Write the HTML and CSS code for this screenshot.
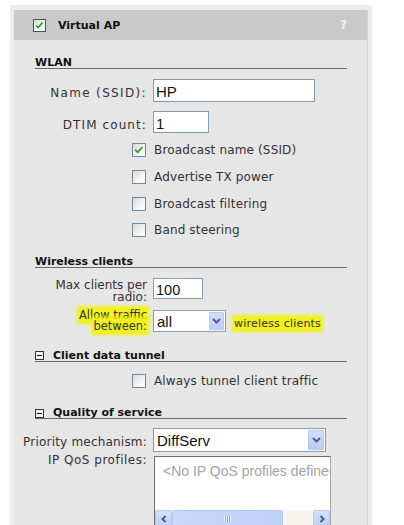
FILE: index.html
```html
<!DOCTYPE html>
<html>
<head>
<meta charset="utf-8">
<link rel="stylesheet" href="styles.css">
</head>
<body>
<div class="frame">
  <div class="panel">
    <div class="titlebar">
      <span class="cb hdr"><svg viewBox="0 0 13 13" width="11" height="11"><polyline points="2.5,6.5 5,9 10,3" fill="none" stroke="#22a322" stroke-width="2"/></svg></span>
      <span class="title">Virtual AP</span>
      <span class="help">?</span>
    </div>

    <div class="sect s-wlan"><span>WLAN</span></div>

    <div class="row r-name">
      <label class="lbl sp-name">Name (SSID):</label>
      <div class="tb w-name">HP</div>
    </div>
    <div class="row r-dtim">
      <label class="lbl sp-dtim">DTIM count:</label>
      <div class="tb w-dtim">1</div>
    </div>

    <div class="cbrows">
      <div class="cbrow"><span class="cb"><svg viewBox="0 0 14 14" width="12" height="12"><polyline points="2.5,6.5 5.5,9.5 11,3.5" fill="none" stroke="#22a322" stroke-width="2"/></svg></span><span class="cbl">Broadcast name (SSID)</span></div>
      <div class="cbrow"><span class="cb"></span><span class="cbl">Advertise TX power</span></div>
      <div class="cbrow"><span class="cb"></span><span class="cbl">Broadcast filtering</span></div>
      <div class="cbrow"><span class="cb"></span><span class="cbl">Band steering</span></div>
    </div>

    <div class="sect s-wc"><span>Wireless clients</span></div>

    <div class="row top r-max">
      <label class="lbl two">Max clients per<br>radio:</label>
      <div class="tb w-max">100</div>
    </div>
    <div class="row top r-allow">
      <label class="lbl two"><span class="hl">Allow traffic<br>between:</span></label>
      <div class="ctl-line">
        <div class="sel w-all"><span class="sv">all</span><span class="btn"><svg viewBox="0 0 9 6" width="9" height="6"><polyline points="1,1 4.5,4.5 8,1" fill="none" stroke="#4a5f8a" stroke-width="2"/></svg></span></div>
        <span class="hl after">wireless clients</span>
      </div>
    </div>

    <div class="sect s-cdt"><span class="box"></span><span>Client data tunnel</span></div>

    <div class="cbrow r-always"><span class="cb"></span><span class="cbl">Always tunnel client traffic</span></div>

    <div class="sect s-qos"><span class="box"></span><span>Quality of service</span></div>

    <div class="row r-prio">
      <label class="lbl sp-prio">Priority mechanism:</label>
      <div class="sel w-prio"><span class="sv">DiffServ</span><span class="btn"><svg viewBox="0 0 9 6" width="9" height="6"><polyline points="1,1 4.5,4.5 8,1" fill="none" stroke="#4a5f8a" stroke-width="2"/></svg></span></div>
    </div>
    <div class="row top r-ipqos">
      <label class="lbl sp-ipqos">IP QoS profiles:</label>
      <div class="lb">
        <div class="lbtext">&lt;No IP QoS profiles defined&gt;</div>
        <div class="hscroll">
          <span class="sbtn"><svg viewBox="0 0 8 8" width="8" height="8"><polyline points="5.5,1 2.5,4 5.5,7" fill="none" stroke="#4a5f8a" stroke-width="2"/></svg></span>
          <span class="thumb"><span class="grip"></span></span>
          <span class="track"></span>
          <span class="sbtn"><svg viewBox="0 0 8 8" width="8" height="8"><polyline points="2.5,1 5.5,4 2.5,7" fill="none" stroke="#4a5f8a" stroke-width="2"/></svg></span>
        </div>
      </div>
    </div>
  </div>
</div>
</body>
</html>
```

FILE: styles.css
```css
html, body {
  margin: 0;
  padding: 0;
  height: 525px;
  overflow: hidden;
  background: #ffffff;
}
body {
  font-family: "DejaVu Sans", Verdana, sans-serif;
  color: #333;
}
.frame {
  margin: 5px 0 0 10px;
  width: 354px;
  height: 520px;
  padding: 5px 4px 0;
  background: #ededed;
}
.panel {
  box-sizing: border-box;
  height: 100%;
  background: #e6e6e6;
  border-right: 1px solid #d3d3d3;
}
.titlebar {
  height: 30px;
  background: #c9c9c9;
  display: flex;
  align-items: center;
  padding-left: 19px;
  padding-right: 20px;
}
.cb {
  box-sizing: border-box;
  width: 14px;
  height: 14px;
  border: 1px solid #7387a0;
  background: linear-gradient(135deg, #d9d9d3 0%, #f4f4f2 60%, #ffffff 100%);
  display: inline-flex;
  align-items: center;
  justify-content: center;
}
.cb.hdr {
  width: 13px;
  height: 13px;
  border-color: #355a6a;
  margin-top: 1px;
}
.title {
  margin-left: 12px;
  font-weight: bold;
  font-size: 11px;
  color: #111;
}
.help {
  margin-left: auto;
  font-weight: bold;
  font-size: 12px;
  color: #f4f4f4;
}

.sect {
  margin: 0 20px 0 21px;
  font-weight: bold;
  font-size: 11px;
  line-height: 10px;
  height: 10px;
  color: #111;
  border-bottom: 1px solid #6a6a6a;
  display: flex;
  align-items: center;
}
.sect .box {
  box-sizing: border-box;
  width: 9px;
  height: 9px;
  border: 1px solid #333;
  background: #f2f2f2;
  margin-right: 9px;
  position: relative;
}
.sect .box::after {
  content: "";
  position: absolute;
  left: 1px;
  top: 3px;
  width: 5px;
  height: 1px;
  background: #111;
}
.s-wlan { margin-top: 18px; }
.s-wc { margin-top: 13px; }
.s-cdt { margin-top: 19px; }
.s-qos { margin-top: 14px; }

.row {
  display: grid;
  grid-template-columns: 133px auto;
  column-gap: 6px;
  align-items: baseline;
  justify-items: start;
}
.row.top { align-items: start; }
.lbl {
  justify-self: end;
  text-align: right;
  font-size: 12px;
  color: #333;
  white-space: nowrap;
}
.sp-name { letter-spacing: 1.35px; }
.sp-dtim { letter-spacing: 1.1px; }
.sp-prio { letter-spacing: 0.2px; }
.sp-ipqos { letter-spacing: 0.5px; }
.lbl.two { line-height: 12px; }

.tb {
  box-sizing: border-box;
  height: 23px;
  border: 1px solid #7f9db9;
  background: #fff;
  font-family: "Liberation Sans", Arial, sans-serif;
  font-size: 15px;
  line-height: 16px;
  padding: 4px 2px 0;
  color: #111;
}
.w-name { width: 162px; }
.w-dtim { width: 56px; height: 22px; }
.w-max { width: 50px; height: 21px; padding-top: 3px; font-size: 14.5px; }

.r-name { margin-top: 10px; }
.r-dtim { margin-top: 9px; }
.r-max { margin-top: 10px; height: 21px; }
.r-max .lbl { margin-top: 1px; }
.r-allow { margin-top: 11px; height: 22px; }

.cbrows { margin-top: 4px; }
.cbrow {
  display: grid;
  grid-template-columns: 133px auto;
  column-gap: 6px;
  align-items: center;
  height: 26.7px;
}
.cbrow .cb { justify-self: end; margin-right: 1px; }
.cbl {
  font-size: 12px;
  letter-spacing: 0.15px;
  color: #333;
  margin-left: 1px;
}
.r-always { margin-top: 6px; }

.hl {
  background: #f1f11c;
  box-shadow: 0 0 3px 2px #f1f11c;
  color: #333;
  -webkit-box-decoration-break: clone;
  box-decoration-break: clone;
}
.r-allow .lbl { font-size: 11.5px; line-height: 11px; margin-top: 0; }
.ctl-line {
  display: flex;
  align-items: baseline;
}
.hl.after {
  font-size: 11px;
  margin-left: 8px;
  letter-spacing: 0.2px;
}

.sel {
  box-sizing: border-box;
  display: inline-flex;
  align-items: baseline;
  height: 22px;
  border: 1px solid #7f9db9;
  background: #fff;
  font-family: "Liberation Sans", Arial, sans-serif;
  font-size: 15px;
  line-height: 16px;
  color: #111;
  position: relative;
}
.sel .sv { padding: 3px 0 0 3px; }
.sel .btn {
  position: absolute;
  right: 1px;
  top: 1px;
  bottom: 1px;
  width: 15px;
  box-sizing: border-box;
  border: 1px solid #b7c9f2;
  border-radius: 1px;
  background: linear-gradient(#d2ddfb, #b9cdf6);
  display: flex;
  align-items: center;
  justify-content: center;
}
.w-all { width: 73px; }
.w-prio { width: 173px; height: 24px; }
.w-prio .sv { padding-top: 4px; }
.w-prio .btn { width: 16px; }

.r-prio { margin-top: 9px; }
.r-ipqos { margin-top: 4px; }
.r-ipqos .lbl { margin-top: -2px; line-height: 12px; }

.lb {
  box-sizing: border-box;
  width: 177px;
  height: 80px;
  border: 1px solid #a9a9a9;
  border-top-color: #6f6f6f;
  border-left-color: #6f6f6f;
  background: #fff;
  overflow: hidden;
  display: flex;
  flex-direction: column;
  margin-left: 1px;
}
.lbtext {
  font-family: "Liberation Sans", Arial, sans-serif;
  font-size: 14px;
  line-height: 16px;
  color: #a3a3a3;
  white-space: nowrap;
  padding: 6px 0 0 8px;
  height: 53px;
  box-sizing: border-box;
}
.hscroll {
  display: flex;
  height: 17px;
  background: #f5f4ef;
}
.sbtn {
  box-sizing: border-box;
  width: 17px;
  height: 17px;
  border: 1px solid #b7c9f2;
  border-radius: 2px;
  background: linear-gradient(#d6e0fb, #bccff6);
  display: flex;
  align-items: center;
  justify-content: center;
}
.thumb {
  box-sizing: border-box;
  width: 111px;
  height: 17px;
  border: 1px solid #b7c9f2;
  border-radius: 2px;
  background: linear-gradient(90deg, #c9d8fb, #bfd1f8);
  display: flex;
  align-items: center;
  justify-content: center;
}
.grip {
  width: 7px;
  height: 6px;
  background: repeating-linear-gradient(90deg, #eef2fd 0 1px, #8ea4d6 1px 2px);
}
.track { flex: 1; }
```
